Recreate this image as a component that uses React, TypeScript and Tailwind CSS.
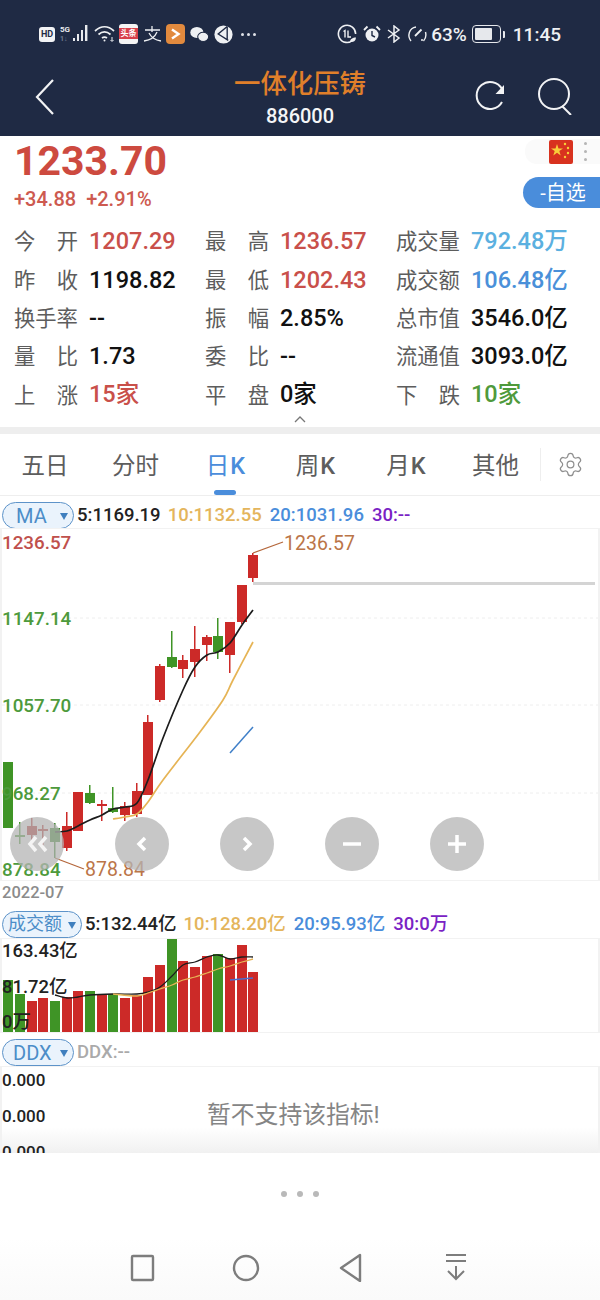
import { Settings } from "lucide-react";
import type { ReactNode } from "react";

const RED = "#cc2a28";
const GREEN = "#3f9426";

// x center, body top, body bottom, wick top, wick bottom, colour (page coordinates)
const candles: [number, number, number, number, number, string][] = [
	[20, 835, 837, 822, 844, GREEN],
	[32, 826, 835, 818, 848, "#b52420"],
	[43, 829, 831, 825, 847, "#b52420"],
	[55, 828, 842, 823, 858, "#2f7f1e"],
	[67, 826, 848, 812, 851, RED],
	[78, 792, 831, 792, 831, RED],
	[90, 793, 803, 785, 804, GREEN],
	[102, 804, 806, 800, 821, RED],
	[113, 808, 812, 787, 813, GREEN],
	[125, 806, 815, 802, 821, RED],
	[137, 791, 814, 783, 817, RED],
	[148, 722, 795, 715, 795, RED],
	[160, 666, 700, 664, 702, RED],
	[172, 657, 667, 631, 668, GREEN],
	[183, 660, 669, 655, 678, RED],
	[195, 649, 662, 626, 677, RED],
	[207, 637, 645, 635, 661, RED],
	[218, 636, 652, 618, 659, GREEN],
	[230, 622, 655, 622, 673, RED],
	[242, 585, 622, 585, 624, RED],
	[253, 555, 578, 553, 582, RED],
];

// x center, top of bar; all bars end at y=1032
const volumes: [number, number, string][] = [
	[8, 980, GREEN],
	[20, 994, GREEN],
	[32, 1001, RED],
	[43, 998, RED],
	[55, 1001, GREEN],
	[67, 997, RED],
	[78, 991, RED],
	[90, 991, GREEN],
	[102, 995, RED],
	[113, 994, GREEN],
	[125, 998, RED],
	[137, 995, RED],
	[148, 977, RED],
	[160, 965, RED],
	[172, 939, GREEN],
	[183, 961, RED],
	[195, 967, RED],
	[207, 956, RED],
	[218, 954, GREEN],
	[230, 958, RED],
	[242, 945, RED],
	[253, 972, RED],
];

const ma5Points: [number, number][] = [[55, 832], [67, 831], [78, 826], [90, 820], [102, 815], [113, 809], [125, 807], [137, 803], [148, 780], [163, 738], [183, 690], [195, 667], [207, 655], [218, 652], [230, 643], [242, 625], [253, 610]];
const ma10Points: [number, number][] = [[113, 819], [125, 817], [137, 814], [148, 802], [163, 780], [200, 732], [223, 700], [233, 680], [253, 642]];
const vol5Points: [number, number][] = [[55, 995], [67, 998], [78, 997], [90, 995], [113, 994], [137, 994], [148, 992], [160, 987], [172, 976], [183, 965], [195, 962], [207, 957], [218, 955], [230, 959], [242, 957], [253, 957]];
const vol10Points: [number, number][] = [[113, 994], [137, 996], [148, 993], [160, 989], [172, 985], [183, 980], [195, 977], [207, 973], [218, 969], [230, 966], [242, 962], [253, 959]];

// catmull-rom through the points, the app draws its averages as curves
function smooth(points: [number, number][]) {
	let d = `M${points[0][0]} ${points[0][1]}`;
	for (let i = 0; i < points.length - 1; i++) {
		const p0 = points[Math.max(i - 1, 0)];
		const p1 = points[i];
		const p2 = points[i + 1];
		const p3 = points[Math.min(i + 2, points.length - 1)];
		d += `C${p1[0] + (p2[0] - p0[0]) / 6} ${p1[1] + (p2[1] - p0[1]) / 6} ${p2[0] - (p3[0] - p1[0]) / 6} ${p2[1] - (p3[1] - p1[1]) / 6} ${p2[0]} ${p2[1]}`;
	}
	return d;
}

const quoteRows: [string, string, string, string][][] = [
	[
		["今", "开", "1207.29", "text-[#c9504a]"],
		["最", "高", "1236.57", "text-[#c9504a]"],
		["成交量", "", "792.48万", "text-[#5bb0e0]"],
	],
	[
		["昨", "收", "1198.82", "text-[#111]"],
		["最", "低", "1202.43", "text-[#c9504a]"],
		["成交额", "", "106.48亿", "text-[#4a90d9]"],
	],
	[
		["换手率", "", "--", "text-[#111]"],
		["振", "幅", "2.85%", "text-[#111]"],
		["总市值", "", "3546.0亿", "text-[#111]"],
	],
	[
		["量", "比", "1.73", "text-[#111]"],
		["委", "比", "--", "text-[#111]"],
		["流通值", "", "3093.0亿", "text-[#111]"],
	],
	[
		["上", "涨", "15家", "text-[#c9504a]"],
		["平", "盘", "0家", "text-[#111]"],
		["下", "跌", "10家", "text-[#4f9a3c]"],
	],
];

function StatusIcons() {
	return (
		<div className="flex items-center">
			<span className="ml-[39px] flex h-[15px] w-[16px] items-center justify-center rounded-[3px] bg-[#f2f3f5] text-[9px] font-bold leading-none text-[#1f2a44]">
				HD
			</span>
			<svg width="32" height="22" viewBox="0 0 32 22" className="ml-[5px]">
				<text x="0" y="9" fontSize="8" fontWeight="700" fill="#e8eaee" fontFamily="Roboto">
					5G
				</text>
				<text x="0" y="18" fontSize="7" fontWeight="700" fill="#6f7a90" fontFamily="Roboto">
					1↓
				</text>
				<rect x="13" y="15" width="2" height="3" fill="#e8eaee" />
				<rect x="17" y="11" width="2" height="7" fill="#e8eaee" />
				<rect x="21" y="7" width="2" height="11" fill="#e8eaee" />
				<rect x="25" y="2" width="2.4" height="16" fill="#e8eaee" />
			</svg>
			<svg width="22" height="18" viewBox="0 0 22 18" className="ml-[2px]" fill="none" stroke="#eef0f3" strokeWidth="1.7">
				<path d="M1 6c6-5.5 13-5.5 19 0" />
				<path d="M4.5 9.5c4-3.4 8-3.4 12 0" />
				<path d="M8 13c2-1.5 3-1.5 5 0" />
				<circle cx="10.5" cy="15.5" r="1" fill="#eef0f3" stroke="none" />
				<path d="M18 12v4M16.5 15l1.5 1.5 1.5-1.5" strokeWidth="1" />
			</svg>
			<span className="ml-[3px] flex h-[20px] w-[19px] flex-col overflow-hidden rounded-[3px] bg-[#f4f4f4]">
				<span className="mt-[4px] flex h-[11px] items-center justify-center bg-[#d8404a] text-[8px] font-bold leading-none text-white">
					头条
				</span>
			</span>
			<svg width="20" height="18" viewBox="0 0 20 18" className="ml-[5px]" fill="none" stroke="#eef0f3" strokeWidth="1.3">
				<path d="M9 1v6M2 5h15M6 8c2 4 6 7 12 8M14 7c-2 5-6 8-13 9" />
			</svg>
			<span className="ml-[3px] flex h-[20px] w-[19px] items-center justify-center rounded-[4px] bg-[#e28a3e]">
				<svg width="11" height="12" viewBox="0 0 11 12" fill="none" stroke="#fff" strokeWidth="2.4">
					<path d="M2 1.5 8.5 6 2 10.5" />
				</svg>
			</span>
			<svg width="19" height="17" viewBox="0 0 18 16" className="ml-[5px]" fill="#eef0f3">
				<ellipse cx="6.5" cy="6" rx="6.2" ry="5.2" />
				<ellipse cx="12.5" cy="10.2" rx="5.2" ry="4.4" stroke="#1f2a44" strokeWidth="1" />
			</svg>
			<svg width="19" height="19" viewBox="0 0 18 18" className="ml-[5px]">
				<circle cx="9" cy="9" r="8.6" fill="#eef0f3" />
				<path d="M12.5 1.5 4 8.5l9.5 6M12.5 1.5v13" fill="none" stroke="#1f2a44" strokeWidth="1.3" />
			</svg>
			<span className="ml-[8px] flex gap-[3px]">
				<i className="h-[3px] w-[3px] rounded-full bg-[#dfe2e8]" />
				<i className="h-[3px] w-[3px] rounded-full bg-[#dfe2e8]" />
				<i className="h-[3px] w-[3px] rounded-full bg-[#dfe2e8]" />
			</span>
		</div>
	);
}

function StatusRight() {
	return (
		<div className="flex items-center text-[19px] font-medium leading-none text-[#eef0f3]">
			<svg width="20" height="20" viewBox="0 0 20 20" fill="none" stroke="#eef0f3" strokeWidth="1.6">
				<path d="M16 16A8.6 8.6 0 1 1 18.6 10" />
				<path d="M6.5 7.5 8 6.5v7M11 6.5v6.500h3" strokeWidth="1.4" />
				<path d="M13 18c0-3 2.5-4.500 6-4.500-.2 3.500-2.500 5-6 4.500Z" fill="#eef0f3" stroke="none" />
			</svg>
			<svg width="18" height="18" viewBox="0 0 18 18" className="ml-[6px]" fill="#eef0f3">
				<circle cx="9" cy="10" r="6.500" />
				<path d="M1 5 4.500 1.500M17 5l-3.500-3.500" stroke="#eef0f3" strokeWidth="1.800" />
				<path d="M9 6v4.500l3 1.500" fill="none" stroke="#1f2a44" strokeWidth="1.400" />
			</svg>
			<svg width="14" height="18" viewBox="0 0 14 18" className="ml-[6px]" fill="none" stroke="#eef0f3" strokeWidth="1.500">
				<path d="M1 5l11 8-5 4V1l5 4-11 8" />
			</svg>
			<svg width="20" height="18" viewBox="0 0 20 18" className="ml-[6px]" fill="none" stroke="#eef0f3" strokeWidth="1.400">
				<path d="M4 16C0 11 2 3 9 2" />
				<path d="M18.500 7c1 4 .5 6.500-2 9" />
				<path d="M8 11 14.500 4.500" strokeWidth="1.800" />
				<path d="M14 15h2" />
			</svg>
			<span className="ml-[4px]">63%</span>
			<span className="ml-[5px] flex h-[18px] w-[29px] items-center rounded-[4px] border-[1.5px] border-[#e6e8ec] p-[2px]">
				<span className="h-full w-[17px] rounded-[1px] bg-[#e6e8ec]" />
			</span>
			<span className="ml-[2px] h-[7px] w-[2px] rounded-r-[1px] bg-[#e6e8ec]" />
			<span className="ml-[8px]">11:45</span>
		</div>
	);
}

function NavBar() {
	return (
		<div className="relative flex h-[69px] items-start justify-center">
			<svg width="20" height="40" viewBox="0 0 20 40" className="absolute left-[35px] top-[10px]" fill="none" stroke="#f2f3f5" strokeWidth="2.200">
				<path d="M18 3 2 20l16 17" />
			</svg>
			<div className="flex flex-col items-center pt-[2px]">
				<span className="text-[26.400px] font-medium leading-[31px] text-[#e07f2a]">一体化压铸</span>
				<span className="text-[20px] font-medium leading-[32px] text-[#f4f5f7]">886000</span>
			</div>
			<svg width="32" height="32" viewBox="0 0 32 32" className="absolute left-[475px] top-[13px]" fill="none" stroke="#f2f3f5" strokeWidth="2">
				<path d="M27 22A13.500 13.500 0 1 1 27 9" />
				<path d="M29 5v9h-8.500z" fill="#f2f3f5" stroke="none" />
			</svg>
			<svg width="36" height="38" viewBox="0 0 36 38" className="absolute left-[537px] top-[10px]" fill="none" stroke="#f2f3f5" strokeWidth="2">
				<circle cx="17" cy="17" r="15" />
				<path d="M25 29l9 9" />
			</svg>
		</div>
	);
}

function QuoteCell({ cell }: { cell: [string, string, string, string] }) {
	const [a, b, value, color] = cell;
	return (
		<div className="flex items-center">
			<span className="flex w-[64px] justify-between text-[21.300px] leading-none text-[#5d5d5d]">
				<span>{a}</span>
				{b ? <span>{b}</span> : null}
			</span>
			<span className={`ml-[11px] text-[23.500px] font-medium leading-none ${color}`}>{value}</span>
		</div>
	);
}

function Quote() {
	return (
		<section className="relative h-[291px] bg-white">
			<div className="px-[14px] pt-[2px]">
				<div className="text-[41px] font-bold leading-[46px] text-[#cd4a3f]">1233.70</div>
				<div className="flex gap-[10px] pt-[4px] text-[20px] font-medium leading-[22px] text-[#cd5a50]">
					<span>+34.88</span>
					<span>+2.91%</span>
				</div>
			</div>
			<div className="absolute right-0 top-[3px] flex h-[25px] items-center rounded-l-[12px] bg-[#fafafa] pl-[24px] pr-[13px]">
				<svg width="24" height="24" viewBox="0 0 24 24">
					<rect width="24" height="24" rx="2" fill="#d8321f" />
					<path d="m8 4 1.500 4.500H14l-3.700 2.600 1.400 4.400L8 12.800 4.300 15.500l1.400-4.400L2 8.500h4.500z" fill="#f8cf3a" />
					<circle cx="16" cy="4" r="1.200" fill="#f8cf3a" />
					<circle cx="19" cy="8" r="1.200" fill="#f8cf3a" />
					<circle cx="19" cy="13" r="1.200" fill="#f8cf3a" />
					<circle cx="16" cy="17" r="1.200" fill="#f8cf3a" />
				</svg>
				<span className="ml-[11px] flex flex-col gap-[5px]">
					<i className="h-[3px] w-[3px] rounded-full bg-[#b5b5b5]" />
					<i className="h-[3px] w-[3px] rounded-full bg-[#b5b5b5]" />
					<i className="h-[3px] w-[3px] rounded-full bg-[#b5b5b5]" />
				</span>
			</div>
			<div className="absolute right-0 top-[41px] flex h-[31px] w-[77px] items-center justify-center rounded-l-[16px] bg-[#4a8ddb] pl-[3px] text-[20px] leading-none text-white">
				-自选
			</div>
			<div className="mt-[18px] flex flex-col gap-[10.300px] pl-[14px]">
				{quoteRows.map((row) => (
					<div key={row[0][0] + row[0][1]} className="grid h-[28px] grid-cols-[191px_191px_1fr] items-center">
						{row.map((cell) => (
							<QuoteCell key={cell[2] + cell[0]} cell={cell} />
						))}
					</div>
				))}
			</div>
			<svg width="12" height="8" viewBox="0 0 12 8" className="absolute left-[294px] bottom-[4px]" fill="none" stroke="#777" strokeWidth="1.300">
				<path d="M1 7l5-5 5 5" />
			</svg>
		</section>
	);
}

function Tabs() {
	const tabs: [string, string][] = [["五日", ""], ["分时", ""], ["日", "K"], ["周", "K"], ["月", "K"], ["其他", ""]];
	return (
		<div className="flex h-[63px] border-b border-t border-[#eeeeee] bg-white">
			<div className="grid w-[540px] grid-cols-[90px_91px_89px_91px_90px_89px] pt-[5px]">
				{tabs.map(([t, k]) => {
					const active = t === "日";
					return (
						<div key={t} className={`relative flex items-center justify-center text-[23.500px] leading-none ${active ? "text-[#4a8ddb]" : "text-[#5d5d5d]"}`}>
							{t}
							{k ? <span className="ml-[1px] font-medium">{k}</span> : null}
							{active ? <span className="absolute bottom-0 left-[33px] h-[5px] w-[22px] rounded-full bg-[#4a8ddb]" /> : null}
						</div>
					);
				})}
			</div>
			<div className="my-[14px] w-px bg-[#eeeeee]" />
			<div className="flex flex-1 items-center justify-center pr-[1px]">
				<Settings size={27} strokeWidth={1.1} color="#8f8f8f" />
			</div>
		</div>
	);
}

function Selector({ label, className }: { label: string; className: string }) {
	return (
		<span className={`relative flex h-[27px] items-center rounded-full border border-[#5d93c9] bg-[#eaf3fc] font-normal leading-none text-[#4c8dc8] ${className}`}>
			{label}
			<svg width="8" height="7" viewBox="0 0 8 7" className="absolute right-[5px] top-[10px]">
				<path d="M0 0h8L4 7z" fill="#3f7fbe" />
			</svg>
		</span>
	);
}

function Legend({ children, className }: { children: ReactNode; className: string }) {
	return <div className={`flex items-center text-[18.500px] font-medium leading-none ${className}`}>{children}</div>;
}

function MainChart() {
	return (
		<div className="relative h-[353px] border-y border-x-2 border-[#f2f2f2] bg-white">
			<svg width="600" height="353" viewBox="0 528 600 353" className="absolute left-[-2px] top-[-1px]">
				{[618, 705, 793].map((y) => (
					<path key={y} d="M0 0H596" transform={`translate(2 ${y})`} stroke="#eeeeee" strokeWidth="1" strokeDasharray="3 3" />
				))}
				<rect x="3" y="762" width="10" height="66" fill={GREEN} />
				{candles.map(([x, top, bottom, wickTop, wickBottom, color]) => (
					<g key={x}>
						<rect x={x - 1} y={wickTop} width="1.500" height={wickBottom - wickTop} fill={color} />
						<rect x={x - 5} y={top} width="10" height={bottom - top} fill={color} />
					</g>
				))}
				<path d={smooth(ma10Points)} fill="none" stroke="#e6b455" strokeWidth="1.700" />
				<path d={smooth(ma5Points)} fill="none" stroke="#1c1c1c" strokeWidth="1.700" />
				<path d="M230 753L253 727" fill="none" stroke="#3f7fc8" strokeWidth="1.500" />
				<path d="M253 553L283 542" fill="none" stroke="#b4663a" strokeWidth="1.200" />
				<path d="M55 858L84 869" fill="none" stroke="#b4663a" strokeWidth="1.200" />
				<rect x="253" y="582" width="342" height="3" fill="#d4d4d4" />
			</svg>
			<span className="absolute left-0 top-[5px] text-[18.800px] font-medium leading-none text-[#c0504c]">1236.57</span>
			<span className="absolute left-0 top-[81px] text-[18.800px] font-medium leading-none text-[#4d9a3c]">1147.14</span>
			<span className="absolute left-0 top-[168px] text-[18.800px] font-medium leading-none text-[#4d9a3c]">1057.70</span>
			<span className="absolute left-0 top-[256px] text-[18.800px] font-medium leading-none text-[#4d9a3c]">968.27</span>
			<span className="absolute left-0 top-[332px] text-[18.800px] font-medium leading-none text-[#4d9a3c]">878.84</span>
			<span className="absolute left-[282px] top-[5px] text-[19.500px] leading-none text-[#bb7548]">1236.57</span>
			<span className="absolute left-[83px] top-[331px] text-[19.500px] leading-none text-[#bb7548]">878.84</span>
			<ChartButton left="left-[8px]">
				<path d="M13 6l-6 7 6 7M23 6l-6 7 6 7" stroke="#f4f4f4" />
			</ChartButton>
			<ChartButton left="left-[113px]">
				<path d="M17 7l-6 6 6 6" stroke="#ffffff" />
			</ChartButton>
			<ChartButton left="left-[218px]">
				<path d="M11 7l6 6-6 6" stroke="#ffffff" />
			</ChartButton>
			<ChartButton left="left-[323px]">
				<path d="M5 13h18" stroke="#ffffff" />
			</ChartButton>
			<ChartButton left="left-[428px]">
				<path d="M5 13h18M14 4v18" stroke="#ffffff" />
			</ChartButton>
		</div>
	);
}

function ChartButton({ left, children }: { left: string; children: ReactNode }) {
	return (
		<span className={`absolute top-[288px] flex h-[54px] w-[54px] items-center justify-center rounded-full bg-[#b4b4b4]/75 ${left}`}>
			<svg width="28" height="26" viewBox="0 0 28 26" fill="none" strokeWidth="3.500">
				{children}
			</svg>
		</span>
	);
}

function VolumeChart() {
	return (
		<div className="relative h-[95px] border-y border-x-2 border-[#f2f2f2] bg-white">
			<svg width="600" height="95" viewBox="0 938 600 95" className="absolute left-[-2px] top-[-1px]">
				{volumes.map(([x, top, color]) => (
					<rect key={x} x={x - 5} y={top} width="10" height={1032 - top} fill={color} />
				))}
				<path d={smooth(vol5Points)} fill="none" stroke="#1c1c1c" strokeWidth="1.300" />
				<path d={smooth(vol10Points)} fill="none" stroke="#e6b455" strokeWidth="1.300" />
				<path d="M230 980L253 978" fill="none" stroke="#4a70d0" strokeWidth="1.300" />
			</svg>
			<span className="absolute left-0 top-[3px] text-[18.400px] font-medium leading-none text-[#222]">163.43亿</span>
			<span className="absolute left-0 top-[39px] text-[18.400px] font-medium leading-none text-[#222]">81.72亿</span>
			<span className="absolute left-0 top-[74px] text-[18.400px] font-medium leading-none text-[#222]">0万</span>
		</div>
	);
}

function DdxChart() {
	return (
		<div className="relative h-[87px] overflow-hidden border-t border-x-2 border-[#f2f2f2] bg-white">
			<div className="absolute inset-x-0 bottom-0 h-[26px] bg-gradient-to-b from-white/0 to-[#ededed]/80" />
			<span className="absolute left-0 top-[5px] text-[17px] font-medium leading-none text-[#222]">0.000</span>
			<span className="absolute left-0 top-[41px] text-[17px] font-medium leading-none text-[#222]">0.000</span>
			<span className="absolute left-0 top-[77px] text-[17px] font-medium leading-none text-[#222]">0.000</span>
			<span className="absolute left-[205px] top-[37px] text-[23.800px] leading-none text-[#858585]">暂不支持该指标!</span>
		</div>
	);
}

function BottomNav() {
	return (
		<div className="flex h-[62px] items-start bg-gradient-to-b from-white to-[#fafafa] pl-[130px] pt-[14px]">
			<svg width="26" height="30" viewBox="0 0 26 30" fill="none" stroke="#7d7d7d" strokeWidth="2.400" strokeLinejoin="round">
				<rect x="2" y="4" width="21" height="24" rx="1" />
			</svg>
			<svg width="30" height="30" viewBox="0 0 30 30" className="ml-[75px]" fill="none" stroke="#7d7d7d" strokeWidth="2.400">
				<circle cx="15" cy="16" r="12" />
			</svg>
			<svg width="26" height="30" viewBox="0 0 26 30" className="ml-[77px]" fill="none" stroke="#7d7d7d" strokeWidth="2.400" strokeLinejoin="round">
				<path d="M22 3v26L3 16z" />
			</svg>
			<svg width="26" height="30" viewBox="0 0 26 30" className="ml-[79px]" fill="none" stroke="#7d7d7d" strokeWidth="2">
				<path d="M3 3h20M3 9h20M13 14v13M5 19l8 8 8-8" />
			</svg>
		</div>
	);
}

export default function App() {
	return (
		<div
			className="h-[1300px] w-[600px] overflow-hidden bg-white"
			style={{ fontFamily: 'Roboto, "Noto Sans CJK SC", sans-serif' }}
		>
			<header className="h-[136px] bg-[#1f2a44]">
				<div className="flex h-[67px] items-center justify-between pr-[39px] pt-[1px]">
					<StatusIcons />
					<StatusRight />
				</div>
				<NavBar />
			</header>
			<Quote />
			<div className="h-[6px] bg-[#eeeeee]" />
			<Tabs />
			<Legend className="h-[32px] pl-[2px] pt-[7px]">
				<Selector label="MA" className="w-[72px] pl-[13px] text-[20px]" />
				<span className="ml-[3px] text-[#222]">5:1169.19</span>
				<span className="ml-[7px] text-[#e4b55c]">10:1132.55</span>
				<span className="ml-[8px] text-[#4a8ddb]">20:1031.96</span>
				<span className="ml-[8px] text-[#7a22c4]">30:--</span>
			</Legend>
			<MainChart />
			<div className="flex h-[25px] items-center pl-[2px] text-[16.500px] font-medium leading-none text-[#8b8b8b]">2022-07</div>
			<Legend className="h-[32px] pl-[2px] pt-[4px]">
				<Selector label="成交额" className="w-[80px] pl-[5px] text-[18px]" />
				<span className="ml-[3px] text-[#222]">5:132.44亿</span>
				<span className="ml-[7px] text-[#e4b55c]">10:128.20亿</span>
				<span className="ml-[8px] text-[#4a8ddb]">20:95.93亿</span>
				<span className="ml-[8px] text-[#7a22c4]">30:0万</span>
			</Legend>
			<VolumeChart />
			<Legend className="h-[33px] pl-[2px] pt-[6px]">
				<Selector label="DDX" className="w-[72px] pl-[10px] text-[20px]" />
				<span className="ml-[3px] text-[#aaaaaa]">DDX:--</span>
			</Legend>
			<DdxChart />
			<div className="flex h-[85px] items-center justify-center gap-[10px] bg-white pb-[4px]">
				<i className="h-[6px] w-[6px] rounded-full bg-[#b9b9b9]" />
				<i className="h-[6px] w-[6px] rounded-full bg-[#b9b9b9]" />
				<i className="h-[6px] w-[6px] rounded-full bg-[#b9b9b9]" />
			</div>
			<BottomNav />
		</div>
	);
}
